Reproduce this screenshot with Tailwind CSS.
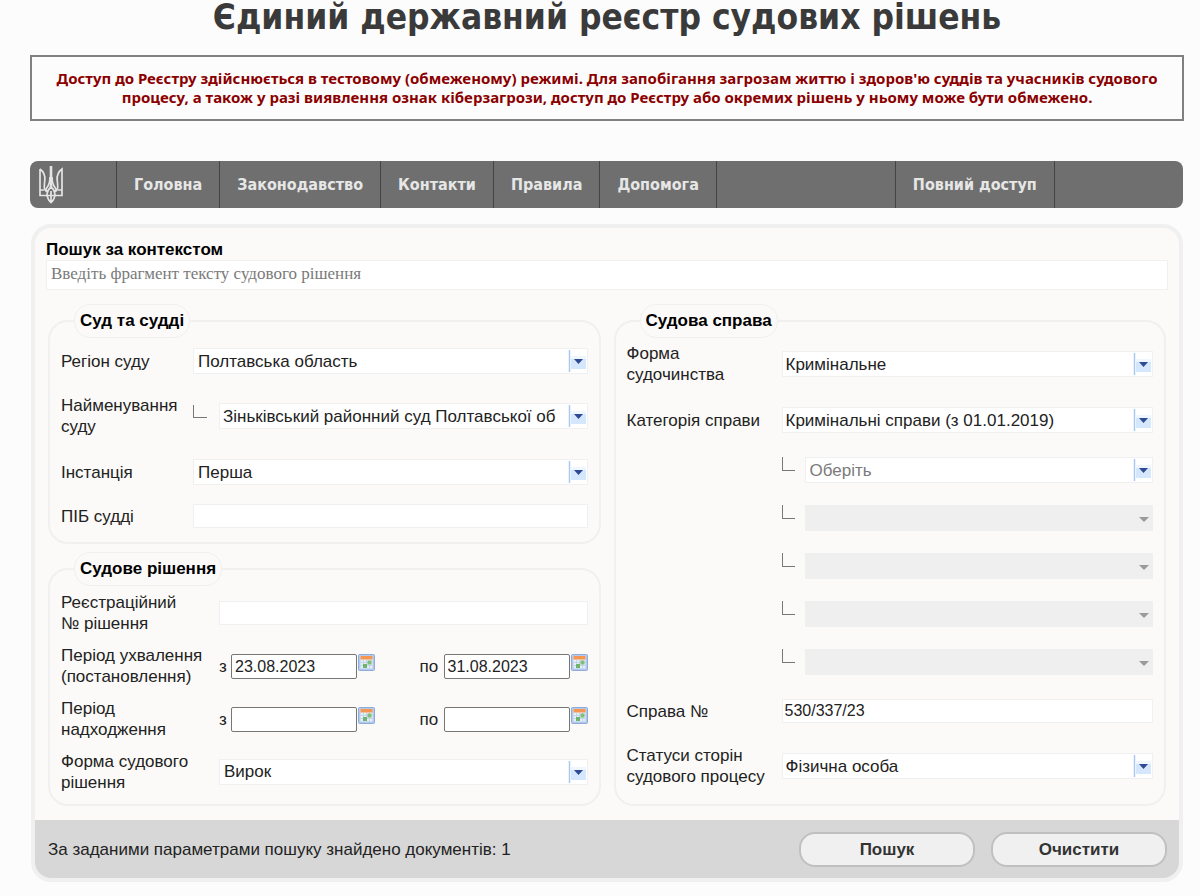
<!DOCTYPE html>
<html lang="uk">
  <head>
    <meta charset="UTF-8" />
    <meta name="viewport" content="width=device-width, initial-scale=1.0" />
    <title>Єдиний державний реєстр судових рішень</title>
    <script src="https://cdn.jsdelivr.net/npm/@tailwindcss/browser@4"></script>
  </head>
  <body class="bg-[#fcfcfc] pr-4 pl-[30px] pb-3 font-['Liberation_Sans',Arial,sans-serif] text-[17px] leading-[21px] text-[#222]">
    <!-- shared icons -->
    <svg class="hidden">
      <symbol id="arrow" viewBox="0 0 20 24">
        <path d="M1.500 1v22" stroke="#aac8ee" stroke-width="1.500" />
        <rect x="3" y="7" width="15" height="4" fill="#eff6fe" />
        <rect x="3" y="10" width="15" height="10" fill="#d5e7fc" />
        <path d="M6 10h9l-4.500 5z" fill="#2f4a94" />
      </symbol>
      <symbol id="arrowOff" viewBox="0 0 20 24">
        <path d="M6 11h10l-5 5z" fill="#9a9a9a" />
      </symbol>
      <symbol id="calendar" viewBox="0 0 17 17">
        <rect x="0.500" y="0.500" width="16" height="16" rx="1" fill="#b4caec" stroke="#8fabd8" />
        <rect x="2.500" y="2" width="12" height="12.500" fill="#e6eef8" />
        <rect x="2.500" y="2" width="12" height="3.500" fill="#f79650" />
        <path d="M2.500 8.500h12M2.500 11.500h12M5.500 6v8.500M8.500 6v8.500M11.500 6v8.500" stroke="#c5d3e6" />
        <rect x="9.500" y="6.500" width="4" height="4" fill="#7fbf7a" />
        <rect x="5" y="10" width="4" height="4" fill="#6fb46c" />
      </symbol>
    </svg>

    <h1 class="text-center font-['DejaVu_Sans_Condensed','DejaVu_Sans',sans-serif] font-stretch-condensed text-[35px] font-bold leading-[34px] text-[#3a3a3a]">Єдиний державний реєстр судових рішень</h1>

    <div class="mt-[21px] border-2 border-[#808080] px-4 py-3 text-center font-['Noto_Sans',sans-serif] text-[15px] font-bold leading-[19px] text-[#8b0000]">
      Доступ до Реєстру здійснюється в тестовому (обмеженому) режимі. Для запобігання загрозам життю і здоров'ю суддів та учасників судового процесу, а також у разі виявлення ознак кіберзагрози, доступ до Реєстру або окремих рішень у ньому може бути обмежено.
    </div>

    <nav class="mt-10 mr-px flex h-[47px] items-stretch rounded-lg bg-[#6f6f6f] font-['DejaVu_Sans_Condensed','DejaVu_Sans',sans-serif] font-stretch-condensed text-base font-bold text-[#e6e6e6]">
      <a href="#" aria-label="Герб" class="w-[86px] pt-1 pl-2">
        <svg class="h-[39px] w-[26px]" viewBox="0 0 26 39" fill="none" stroke="#e4e4e4" stroke-width="1.700">
          <path d="M13 1v21" stroke-width="2.600" />
          <path d="M12 12c0 5-1 8-3 10.500-1.300 1.600-1.500 3.200-.3 4.500M14 12c0 5 1 8 3 10.500 1.300 1.600 1.500 3.200.3 4.500" />
          <path d="M2 4v26.500h22V4c-4 3-5.200 7-4.800 11 .3 4 1 7 .2 9-.6 1.500-2 2.200-3.400 2.200M2 4c4 3 5.200 7 4.800 11-.3 4-1 7-.2 9 .6 1.500 2 2.200 3.400 2.200" />
          <path d="M2 25h4.500M24 25h-4.500M13 22c-2.500 2-3.800 4.500-4 8 .5 3.500 2 5.800 4 7.500 2-1.700 3.500-4 4-7.500-.2-3.500-1.500-6-4-8zM13 26v11" />
        </svg>
      </a>
      <a href="#" class="flex items-center border-l border-[#444] px-[17px]">Головна</a>
      <a href="#" class="flex items-center border-l border-[#444] px-[17px]">Законодавство</a>
      <a href="#" class="flex items-center border-l border-[#444] px-[17px]">Контакти</a>
      <a href="#" class="flex items-center border-l border-[#444] px-[17px]">Правила</a>
      <a href="#" class="flex items-center border-l border-[#444] px-[17px]">Допомога</a>
      <span class="w-[179px] border-l border-[#444]"></span>
      <a href="#" class="flex items-center border-x border-[#444] px-[17px]">Повний доступ</a>
    </nav>

    <form class="mx-px mt-4 overflow-hidden rounded-[20px] border-4 border-[#f0f0f0] bg-[#fbfaf8]">
      <div class="px-[11px] pt-[11px]">
        <label for="context" class="block font-bold text-black">Пошук за контекстом</label>
        <input id="context" type="text" placeholder="Введіть фрагмент тексту судового рішення" class="block h-[30px] w-full border border-[#f0f0f0] bg-white px-1 pb-[2px] font-['Liberation_Serif',serif] placeholder:text-[#7a7a7a]" />
      </div>

      <div class="mt-[14px] grid grid-cols-2 gap-[13px] px-[13px] pb-[14px]">
        <div class="flex flex-col gap-2">
          <fieldset class="rounded-[20px] border-2 border-[#f0f0f0] px-[11px] pb-[6px]">
            <legend class="ml-[13px] rounded-2xl border border-[#f0f0f0] px-[5px] py-[5px] leading-[22px] font-bold text-black">Суд та судді</legend>
            <div class="flex h-[46px] items-center">
              <label for="region" class="w-[132px]">Регіон суду</label>
              <div class="relative flex-1">
                <select id="region" class="block h-[26px] w-full appearance-none border border-[#f0f0f0] bg-white pr-6 pl-1"><option>Полтавська область</option></select>
                <svg class="pointer-events-none absolute top-px right-0 h-6 w-5"><use href="#arrow" /></svg>
              </div>
            </div>
            <div class="flex h-16 items-center">
              <label for="court" class="w-[132px]">Найменування суду</label>
              <span class="mr-3 mb-[10px] h-[13px] w-[14px] border-b border-l border-[#777]"></span>
              <div class="relative min-w-0 flex-1">
                <select id="court" class="block h-[26px] w-full appearance-none border border-[#f0f0f0] bg-white pr-6 pl-[3px]"><option>Зіньківський районний суд Полтавської об</option></select>
                <svg class="pointer-events-none absolute top-px right-0 h-6 w-5"><use href="#arrow" /></svg>
              </div>
            </div>
            <div class="flex h-12 items-center">
              <label for="instance" class="w-[132px]">Інстанція</label>
              <div class="relative flex-1">
                <select id="instance" class="block h-[26px] w-full appearance-none border border-[#f0f0f0] bg-white pr-6 pl-1"><option>Перша</option></select>
                <svg class="pointer-events-none absolute top-px right-0 h-6 w-5"><use href="#arrow" /></svg>
              </div>
            </div>
            <div class="flex h-10 items-center">
              <label for="judge" class="w-[132px]">ПІБ судді</label>
              <input id="judge" type="text" class="h-6 min-w-0 flex-1 border border-[#f0f0f0] bg-white px-1" />
            </div>
          </fieldset>

          <fieldset class="rounded-[20px] border-2 border-[#f0f0f0] px-[11px] pb-[6px]">
            <legend class="ml-[13px] rounded-2xl border border-[#f0f0f0] px-[5px] py-[5px] leading-[22px] font-bold text-black">Судове рішення</legend>
            <div class="flex h-[53px] items-center">
              <label for="regnum" class="w-[158px] pr-8">Реєстраційний №&nbsp;рішення</label>
              <input id="regnum" type="text" class="h-6 min-w-0 flex-1 border border-[#f0f0f0] bg-white px-1" />
            </div>
            <div class="flex h-[53px] items-center">
              <span class="w-[158px]">Період ухвалення (постановлення)</span>
              <div class="flex flex-1 justify-between pt-[2px]">
                <div class="flex">
                  <label for="adoptFrom" class="w-3 pt-[2px]">з</label>
                  <input id="adoptFrom" type="text" value="23.08.2023" class="h-[25px] w-[126px] rounded-[2px] border border-[#767676] bg-white px-[3px] text-base" />
                  <button type="button" aria-label="Календар" class="ml-px h-[17px]"><svg class="size-[17px]"><use href="#calendar" /></svg></button>
                </div>
                <div class="flex">
                  <label for="adoptTo" class="w-6 pt-[2px]">по</label>
                  <input id="adoptTo" type="text" value="31.08.2023" class="h-[25px] w-[126px] rounded-[2px] border border-[#767676] bg-white px-[3px] text-base" />
                  <button type="button" aria-label="Календар" class="ml-px h-[17px]"><svg class="size-[17px]"><use href="#calendar" /></svg></button>
                </div>
              </div>
            </div>
            <div class="flex h-[53px] items-center">
              <span class="w-[158px] pr-8">Період надходження</span>
              <div class="flex flex-1 justify-between pt-[2px]">
                <div class="flex">
                  <label for="receiptFrom" class="w-3 pt-[2px]">з</label>
                  <input id="receiptFrom" type="text" class="h-[25px] w-[126px] rounded-[2px] border border-[#767676] bg-white px-[3px] text-base" />
                  <button type="button" aria-label="Календар" class="ml-px h-[17px]"><svg class="size-[17px]"><use href="#calendar" /></svg></button>
                </div>
                <div class="flex">
                  <label for="receiptTo" class="w-6 pt-[2px]">по</label>
                  <input id="receiptTo" type="text" class="h-[25px] w-[126px] rounded-[2px] border border-[#767676] bg-white px-[3px] text-base" />
                  <button type="button" aria-label="Календар" class="ml-px h-[17px]"><svg class="size-[17px]"><use href="#calendar" /></svg></button>
                </div>
              </div>
            </div>
            <div class="flex h-[53px] items-center">
              <label for="form" class="w-[158px]">Форма судового рішення</label>
              <div class="relative flex-1">
                <select id="form" class="block h-[26px] w-full appearance-none border border-[#f0f0f0] bg-white pr-6 pl-1"><option>Вирок</option></select>
                <svg class="pointer-events-none absolute top-px right-0 h-6 w-5"><use href="#arrow" /></svg>
              </div>
            </div>
          </fieldset>
        </div>

        <fieldset class="rounded-[20px] border-2 border-[#f0f0f0] px-[11px] pb-[11px]">
          <legend class="ml-[13px] rounded-2xl border border-[#f0f0f0] px-[5px] py-[5px] leading-[22px] font-bold text-black">Судова справа</legend>
          <div class="flex flex-col gap-[22px] pt-[5px]">
            <div class="flex items-center">
              <label for="proceeding" class="w-[155px] pr-10">Форма судочинства</label>
              <div class="relative flex-1">
                <select id="proceeding" class="block h-[26px] w-full appearance-none border border-[#f0f0f0] bg-white pr-6 pl-[3px]"><option>Кримінальне</option></select>
                <svg class="pointer-events-none absolute top-px right-0 h-6 w-5"><use href="#arrow" /></svg>
              </div>
            </div>
            <div class="flex items-center">
              <label for="category" class="w-[155px]">Категорія справи</label>
              <div class="relative flex-1">
                <select id="category" class="block h-[26px] w-full appearance-none border border-[#f0f0f0] bg-white pr-6 pl-[3px]"><option>Кримінальні справи (з 01.01.2019)</option></select>
                <svg class="pointer-events-none absolute top-px right-0 h-6 w-5"><use href="#arrow" /></svg>
              </div>
            </div>
            <div class="flex flex-col gap-[22px] py-[2px] pl-[155px]">
              <div class="flex">
                <span class="mr-[10px] h-[14px] w-[13px] border-b border-l border-[#777]"></span>
                <div class="relative flex-1">
                  <select aria-label="Підкатегорія 1" class="block h-[26px] w-full appearance-none border border-[#f0f0f0] bg-white pr-6 pl-1 text-[#7a7a7a]"><option>Оберіть</option></select>
                  <svg class="pointer-events-none absolute top-px right-0 h-6 w-5"><use href="#arrow" /></svg>
                </div>
              </div>
              <div class="flex">
                <span class="mr-[10px] h-[14px] w-[13px] border-b border-l border-[#777]"></span>
                <div class="relative flex-1">
                  <select aria-label="Підкатегорія 2" disabled class="block h-[26px] w-full appearance-none bg-[#efefef]"></select>
                  <svg class="pointer-events-none absolute top-px right-0 h-6 w-5"><use href="#arrowOff" /></svg>
                </div>
              </div>
              <div class="flex">
                <span class="mr-[10px] h-[14px] w-[13px] border-b border-l border-[#777]"></span>
                <div class="relative flex-1">
                  <select aria-label="Підкатегорія 3" disabled class="block h-[26px] w-full appearance-none bg-[#efefef]"></select>
                  <svg class="pointer-events-none absolute top-px right-0 h-6 w-5"><use href="#arrowOff" /></svg>
                </div>
              </div>
              <div class="flex">
                <span class="mr-[10px] h-[14px] w-[13px] border-b border-l border-[#777]"></span>
                <div class="relative flex-1">
                  <select aria-label="Підкатегорія 4" disabled class="block h-[26px] w-full appearance-none bg-[#efefef]"></select>
                  <svg class="pointer-events-none absolute top-px right-0 h-6 w-5"><use href="#arrowOff" /></svg>
                </div>
              </div>
              <div class="flex">
                <span class="mr-[10px] h-[14px] w-[13px] border-b border-l border-[#777]"></span>
                <div class="relative flex-1">
                  <select aria-label="Підкатегорія 5" disabled class="block h-[26px] w-full appearance-none bg-[#efefef]"></select>
                  <svg class="pointer-events-none absolute top-px right-0 h-6 w-5"><use href="#arrowOff" /></svg>
                </div>
              </div>
            </div>
            <div class="flex items-center">
              <label for="caseNumber" class="w-[155px]">Справа №</label>
              <input id="caseNumber" type="text" value="530/337/23" class="h-6 min-w-0 flex-1 border border-[#f0f0f0] bg-white px-[2px] text-base" />
            </div>
            <div class="flex items-center">
              <label for="status" class="w-[155px]">Статуси сторін судового процесу</label>
              <div class="relative flex-1">
                <select id="status" class="block h-[26px] w-full appearance-none border border-[#f0f0f0] bg-white pr-6 pl-[3px]"><option>Фізична особа</option></select>
                <svg class="pointer-events-none absolute top-px right-0 h-6 w-5"><use href="#arrow" /></svg>
              </div>
            </div>
          </div>
        </fieldset>
      </div>

      <div class="flex h-[58px] items-center gap-4 bg-[#d7d7d7] pr-3 pl-[13px]">
        <p class="flex-1">За заданими параметрами пошуку знайдено документів: 1</p>
        <button type="submit" class="h-[35px] w-44 rounded-2xl border-2 border-[#c0c0c0] bg-[#f0f0f0] font-bold text-[#333]">Пошук</button>
        <button type="reset" class="h-[35px] w-44 rounded-2xl border-2 border-[#c0c0c0] bg-[#f0f0f0] font-bold text-[#333]">Очистити</button>
      </div>
    </form>
  </body>
</html>
